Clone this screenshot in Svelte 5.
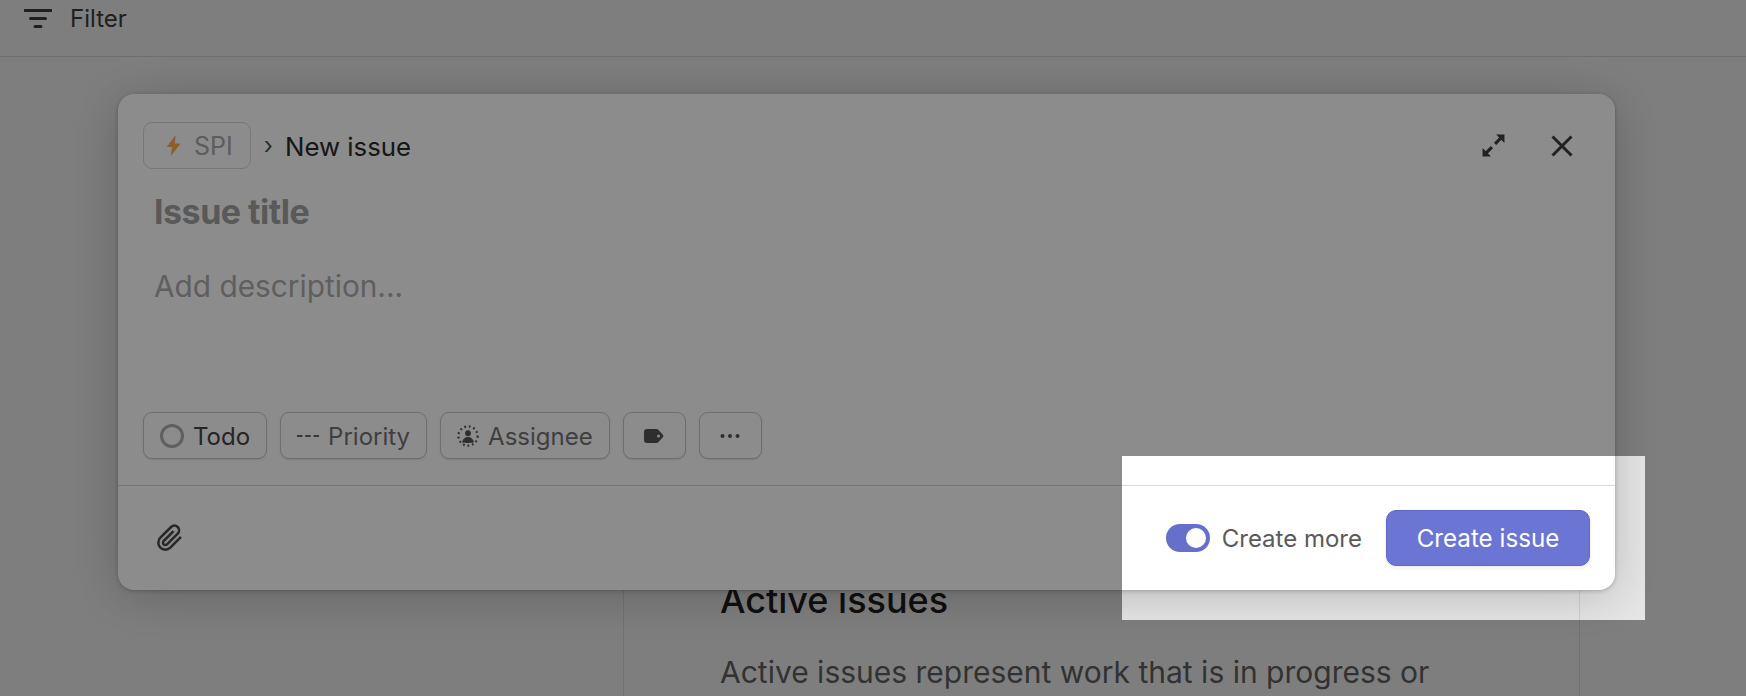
<script lang="ts">
	let createMore = $state(true);
	const chips = ['Todo', 'Priority', 'Assignee'];
</script>

<div class="page">
	<header class="topbar">
		<svg class="filter-icon" viewBox="0 0 28 20" width="28" height="20">
			<path d="M1 1.5h26M6.5 9.5h15M11 17.5h6" />
		</svg>
		<span>Filter</span>
	</header>

	<main class="doc">
		<h2>Active issues</h2>
		<p>Active issues represent work that is in progress or</p>
	</main>

	<section class="modal">
		<div class="modal-head">
			<div class="team">
				<svg viewBox="0 0 14 20" width="15" height="21">
					<path d="M9 0 .5 11.500h5L4.500 20 13.800 8H8.200z" />
				</svg>
				<span>SPI</span>
			</div>
			<span class="crumb">›</span>
			<span class="new">New issue</span>
			<div class="head-actions">
				<svg class="expand" viewBox="0 0 24 24" width="25" height="25">
					<path class="line" d="M13.500 10.500 19 5M10.500 13.500 5 19" />
					<path class="solid-dark" d="M14.500 1.500h8v8zM9.500 22.500h-8v-8z" />
				</svg>
				<svg class="close" viewBox="0 0 22 22" width="22" height="22">
					<path class="line" d="M1.500 1.500l19 19M20.500 1.500l-19 19" />
				</svg>
			</div>
		</div>

		<h1 class="title">Issue title</h1>
		<div class="desc">Add description...</div>

		<div class="chips">
			{#each chips as chip}
				<button class="chip">
					{#if chip === 'Todo'}
						<span class="ring"></span>
					{:else if chip === 'Priority'}
						<svg viewBox="0 0 22 4" width="22" height="4"><path class="dash" d="M0 2h5.500M8.200 2h5.500M16.500 2h5.500" /></svg>
					{:else}
						<svg viewBox="0 0 24 24" width="22" height="22">
							<circle class="dotted" cx="12" cy="12" r="10.500" />
							<circle class="solid" cx="12" cy="9" r="3.200" />
							<path class="solid" d="M5.500 19c.8-4 3-6 6.500-6s5.700 2 6.500 6c-1.500.5-2.500.5-3.500 0-1 .8-5 .8-6 0-1 .5-2 .5-3.500 0z" />
						</svg>
					{/if}
					<span class="label" class:dark={chip === 'Todo'}>{chip}</span>
				</button>
			{/each}
			<button class="chip square" aria-label="Labels">
				<svg viewBox="0 0 20 14" width="20" height="14">
					<path class="solid" fill-rule="evenodd" d="M3 0h9.500c.8 0 1.500.3 2 .9l4.600 5c.3.400.3 1.800 0 2.200l-4.600 5c-.5.600-1.200.9-2 .9H3a3 3 0 0 1-3-3V3a3 3 0 0 1 3-3zm11.500 5.500a1.500 1.500 0 1 0 0 3 1.500 1.500 0 0 0 0-3z" />
				</svg>
			</button>
			<button class="chip square" aria-label="More">
				<svg viewBox="0 0 20 4" width="20" height="4">
					<circle class="solid" cx="2.500" cy="2" r="2" />
					<circle class="solid" cx="10" cy="2" r="2" />
					<circle class="solid" cx="17.500" cy="2" r="2" />
				</svg>
			</button>
		</div>

		<footer class="modal-foot">
			<svg class="clip" viewBox="0 0 24 24" width="28" height="28">
				<path d="M21.440 11.050l-9.190 9.190a6 6 0 0 1-8.490-8.490l9.190-9.190a4 4 0 0 1 5.660 5.660l-9.200 9.190a2 2 0 0 1-2.830-2.830l8.490-8.480" />
			</svg>
			<div class="foot-right">
				<button class="toggle" class:on={createMore} aria-label="Toggle create more" onclick={() => (createMore = !createMore)}></button>
				<span class="more">Create more</span>
				<button class="submit">Create issue</button>
			</div>
		</footer>
	</section>

	<div class="spotlight"></div>
</div>

<style>
	:global(body) {
		margin: 0;
		overflow: hidden;
	}

	.page {
		position: relative;
		width: 1746px;
		height: 696px;
		overflow: hidden;
		background: #e6e6e6;
		font-family: Inter, 'Liberation Sans', sans-serif;
		color: #222;
	}

	.topbar {
		display: flex;
		align-items: center;
		gap: 18px;
		height: 57px;
		padding: 0 24px 19px;
		box-sizing: border-box;
		border-bottom: 1px solid #c8c8c8;
		font-size: 24px;
		color: #3a3a3a;
	}

	.filter-icon path {
		fill: none;
		stroke: #3a3a3a;
		stroke-width: 3;
		stroke-linecap: round;
	}

	.doc {
		width: 957px;
		height: 640px;
		margin: 100px 0 0 623px;
		padding: 421px 0 0 96px;
		box-sizing: border-box;
		border-left: 1px solid #d0d0d0;
		border-right: 1px solid #d0d0d0;
	}

	.doc h2 {
		margin: 0;
		font-size: 36px;
		line-height: 44px;
		font-weight: 500;
		color: #1c1c1c;
	}

	.doc p {
		margin: 30px 0 0;
		font-size: 30px;
		line-height: 40px;
		color: #5c5c5c;
	}

	.modal {
		position: absolute;
		left: 118px;
		top: 94px;
		width: 1497px;
		height: 496px;
		display: flex;
		flex-direction: column;
		box-sizing: border-box;
		padding-top: 28px;
		background: #fff;
		border-radius: 16px;
		box-shadow: 0 6px 50px rgba(0, 0, 0, 0.2), 0 1px 4px rgba(0, 0, 0, 0.22);
	}

	.modal-head {
		display: flex;
		align-items: center;
		height: 47px;
		padding: 0 42px 0 25px;
	}

	.team {
		display: flex;
		align-items: center;
		gap: 13px;
		height: 47px;
		padding: 0 17px 0 22px;
		box-sizing: border-box;
		border: 1px solid #d8d8d8;
		border-radius: 9px;
		font-size: 25px;
		color: #aaa;
	}

	.team path {
		fill: #ffac55;
	}

	.crumb {
		margin: 0 12px 0 13px;
		font-size: 24px;
		color: #555;
	}

	.new {
		padding-top: 1px;
		font-size: 25.800px;
		color: #2a2a2a;
	}

	.head-actions {
		margin-left: auto;
		display: flex;
		align-items: center;
		gap: 45px;
	}

	.head-actions .line {
		fill: none;
		stroke: #3c3c3c;
		stroke-width: 3;
	}

	.solid-dark {
		fill: #3c3c3c;
	}

	.title {
		margin: 21px 0 0 36px;
		font-size: 34px;
		line-height: 44px;
		font-weight: 700;
		letter-spacing: -0.5px;
		color: #a2a2a2;
	}

	.desc {
		margin: 32px 0 0 36px;
		font-size: 29.800px;
		line-height: 40px;
		color: #aeaeae;
	}

	.chips {
		display: flex;
		gap: 13px;
		margin-top: auto;
		padding: 0 25px;
	}

	.chip {
		display: flex;
		align-items: center;
		gap: 9px;
		height: 47px;
		padding: 0 16px;
		box-sizing: border-box;
		background: #fff;
		border: 1px solid #c8c8c8;
		border-radius: 9px;
		box-shadow: 0 1px 2px rgba(0, 0, 0, 0.1);
		font-family: inherit;
		font-size: 24px;
		color: #747474;
	}

	.label {
		padding-top: 1px;
	}

	.chip .dark {
		color: #444;
	}

	.chip.square {
		width: 63px;
		padding: 0;
		justify-content: center;
	}

	.ring {
		width: 18px;
		height: 18px;
		border: 3px solid #aeaeae;
		border-radius: 50%;
	}

	.dash {
		fill: none;
		stroke: #666;
		stroke-width: 2;
	}

	.dotted {
		fill: none;
		stroke: #5a5a5a;
		stroke-width: 2.500;
		stroke-dasharray: 2 3;
	}

	.solid {
		fill: #555;
	}

	.modal-foot {
		display: flex;
		align-items: center;
		justify-content: space-between;
		height: 105px;
		margin-top: 26px;
		padding: 0 25px 0 38px;
		box-sizing: border-box;
		border-top: 1px solid #d9d9d9;
	}

	.clip path {
		fill: none;
		stroke: #4a4a4a;
		stroke-width: 2.200;
	}

	.foot-right {
		display: flex;
		align-items: center;
	}

	.toggle {
		position: relative;
		width: 44px;
		height: 28px;
		padding: 0;
		border: 0;
		border-radius: 14px;
		background: #ccc;
	}

	.toggle.on {
		background: #6570cd;
	}

	.toggle::after {
		content: '';
		position: absolute;
		top: 4px;
		left: 4px;
		width: 20px;
		height: 20px;
		border-radius: 50%;
		background: #fff;
	}

	.toggle.on::after {
		left: 20px;
	}

	.more {
		margin: 0 24px 0 12px;
		padding-top: 1px;
		font-size: 24px;
		color: #5a5a5a;
	}

	.submit {
		width: 204px;
		height: 56px;
		padding: 0;
		background: #6b75d3;
		border: 1px solid #5f69c4;
		border-radius: 10px;
		box-shadow: 0 2px 5px rgba(0, 0, 0, 0.08);
		font-family: inherit;
		font-size: 24.200px;
		color: #fff;
	}

	/* dims everything outside the cut-out */
	.spotlight {
		position: absolute;
		left: 1122px;
		top: 456px;
		width: 523px;
		height: 164px;
		box-shadow: 0 0 0 2000px rgba(0, 0, 0, 0.45);
		pointer-events: none;
	}
</style>
